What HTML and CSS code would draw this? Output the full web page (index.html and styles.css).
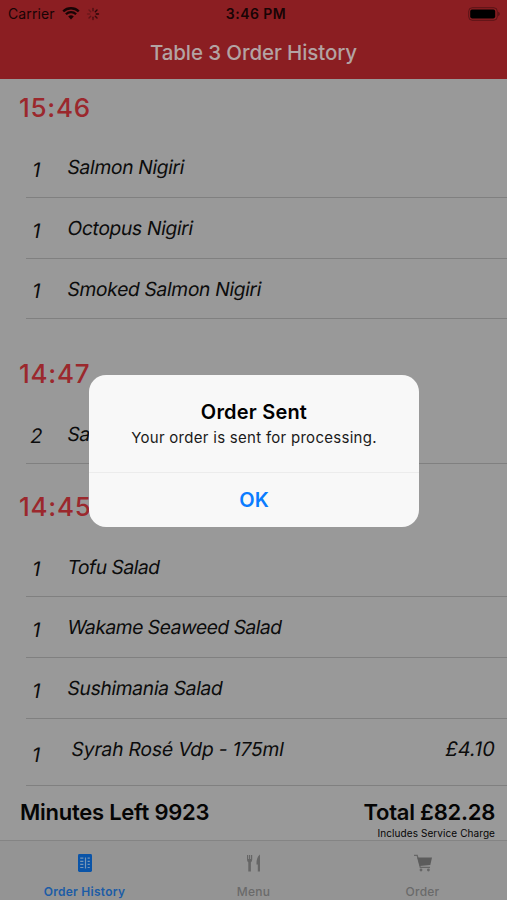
FILE: index.html
```html
<!DOCTYPE html>
<html lang="en">
<head>
<meta charset="utf-8">
<title>Order History</title>
<link rel="stylesheet" href="styles.css">
</head>
<body>
<div class="screen">
  <header class="header">
    <div class="status">
      <div class="status-left">
        <span class="carrier">Carrier</span>
        <svg class="wifi" width="18" height="13" viewBox="0 0 18 13"><path d="M9 12.500 6.200 9.600a4 4 0 0 1 5.600 0z" fill="currentColor"/><path d="M3.900 7.300a7.300 7.300 0 0 1 10.200 0M1.200 4.400a11.200 11.200 0 0 1 15.600 0" fill="none" stroke="currentColor" stroke-width="2.300"/></svg>
        <svg class="spinner" width="14" height="14" viewBox="-7 -7 14 14" stroke="currentColor" stroke-width="1.4" stroke-linecap="round"><path d="M0-3.2V-5.5" opacity=".55"/><path d="M2.3-2.3 4-4" opacity=".85"/><path d="M3.2 0H5.500" opacity=".85"/><path d="M2.300 2.300 4 4" opacity=".7"/><path d="M0 3.200V5.500" opacity=".55"/><path d="M-2.300 2.300-4 4" opacity=".4"/><path d="M-3.200 0H-5.500" opacity=".25"/><path d="M-2.300-2.300-4-4" opacity=".3"/></svg>
      </div>
      <span class="clock">3:46 PM</span>
      <div class="status-right">
        <svg width="32" height="14" viewBox="0 0 32 14"><rect x=".7" y=".7" width="28.6" height="12.6" rx="3.6" fill="none" stroke="currentColor" stroke-width="1" opacity=".35"/><rect x="2.200" y="2.600" width="25" height="8.800" rx="1.800" fill="currentColor"/><path d="M30.200 4.800q1.600 .6 1.600 2.200t-1.600 2.200z" fill="currentColor" opacity=".4"/></svg>
      </div>
    </div>
    <h1 class="title"><span>Table 3 Order History</span></h1>
  </header>

  <main class="history">
    <section class="group">
      <h2 class="time">15:46</h2>
      <div class="row"><span class="qty">1</span><span class="name">Salmon Nigiri</span></div>
      <div class="row"><span class="qty">1</span><span class="name">Octopus Nigiri</span></div>
      <div class="row"><span class="qty">1</span><span class="name">Smoked Salmon Nigiri</span></div>
    </section>
    <section class="group group-middle">
      <h2 class="time">14:47</h2>
      <div class="row"><span class="qty">2</span><span class="name">Sa</span></div>
    </section>
    <section class="group group-last">
      <h2 class="time">14:45</h2>
      <div class="row"><span class="qty">1</span><span class="name salad">Tofu Salad</span></div>
      <div class="row"><span class="qty">1</span><span class="name salad">Wakame Seaweed Salad</span></div>
      <div class="row"><span class="qty">1</span><span class="name">Sushimania Salad</span></div>
      <div class="row row-priced"><span class="qty">1</span><span class="name">Syrah Rosé Vdp - 175ml</span><span class="price">£4.10</span></div>
    </section>
  </main>

  <div class="summary">
    <span class="minutes">Minutes Left 9923</span>
    <div class="total-box">
      <span class="total">Total £82.28</span>
      <span class="service">Includes Service Charge</span>
    </div>
  </div>

  <nav class="tabs">
    <div class="tab active">
      <svg width="20" height="20" viewBox="0 0 20 20"><rect x="3" y="1" width="14" height="18" rx="1.4" fill="#0a54a8"/><path d="M5.200 5.200h3.200M5.200 8.300h3.200M5.200 11.400h3.200M5.200 14.500h3.200M12.600 5.200h2.200M12.600 8.300h2.200M12.600 11.400h2.200M12.600 14.500h2.200M10.500 4.500v11" stroke="#7897b7" stroke-width="1.200"/></svg>
      <span>Order History</span>
    </div>
    <div class="tab">
      <svg width="20" height="20" viewBox="0 0 20 20" fill="#666"><path d="M3 2h1v4h.8V2h1.400v4H7V2h1.200v4.600q0 2-1.300 2.700V18.500H4.300V9.300Q3 8.600 3 6.600zM16 1.500V18.500H13.800V11.500H12.500Q12.300 4 16 1.500z"/></svg>
      <span>Menu</span>
    </div>
    <div class="tab">
      <svg width="20" height="20" viewBox="0 0 20 20"><path d="M1 2.300H4.200L7.300 14.300H17" fill="none" stroke="#666" stroke-width="1.300"/><path d="M4.300 4.500H19L17.300 12 6.800 13z" fill="#5c5c5c"/><circle cx="8" cy="17" r="1.400" fill="#666"/><circle cx="15.400" cy="17" r="1.400" fill="#666"/></svg>
      <span>Order</span>
    </div>
  </nav>

  <div class="alert" role="dialog">
    <div class="alert-body">
      <div class="alert-title">Order Sent</div>
      <div class="alert-text">Your order is sent for processing.</div>
    </div>
    <div class="alert-action">OK</div>
  </div>
</div>
</body>
</html>
```
FILE: styles.css
```css
* { box-sizing: border-box; }
body { margin: 0; }
.screen {
  position: relative;
  width: 507px;
  height: 900px;
  overflow: hidden;
  display: flex;
  flex-direction: column;
  background: #999;
  color: #0c0c0c;
  font-family: Inter, "Liberation Sans", sans-serif;
  white-space: nowrap;
}
.header { height: 79px; background: #8b1e22; flex: none; }
.status {
  display: grid;
  grid-template-columns: 1fr auto 1fr;
  align-items: center;
  height: 27px;
  padding: 0 7px 0 8px;
  color: #180405;
}
.status-left { display: flex; align-items: center; font-size: 14px; letter-spacing: .1px; }
.wifi { margin-left: 7px; }
.spinner { margin-left: 6px; }
.clock { font-size: 14px; font-weight: 600; letter-spacing: .45px; margin-left: 4px; }
.status-right { display: flex; justify-content: flex-end; color: #000; }
.title {
  margin: 0;
  height: 52px;
  line-height: 51px;
  text-align: center;
  font-size: 20.5px;
  font-weight: 550;
  letter-spacing: -.1px;
  color: #b3a3a3;
}
.history { flex: none; height: 706px; }
.time {
  margin: 0;
  height: 58px;
  padding-left: 19px;
  line-height: 58px;
  font-size: 26px;
  font-weight: 550;
  letter-spacing: .75px;
  color: #9b282d;
}
.group-middle { margin-top: 26px; }
.group-last { margin-top: 14px; }
.row {
  display: flex;
  align-items: center;
  height: 60.8px;
  margin-left: 26px;
  border-bottom: 1px solid #808080;
  font-size: 20px;
}
.qty, .name, .price { transform: skewX(-10deg); transform-origin: 0 70%; }
.qty { width: 20px; text-align: center; padding-top: 6px; }
.name { margin-left: 20.5px; padding-top: 1px; font-size: 19.3px; letter-spacing: -.35px; }
.salad { letter-spacing: -.5px; }
.row-priced { height: 67px; padding: 0 13px 6px 0; }
.row-priced .qty { padding-top: 12px; }
.row-priced .name { margin-left: 25px; letter-spacing: -.18px; }
.price { margin-left: auto; }
.summary {
  display: flex;
  justify-content: space-between;
  height: 55px;
  padding: 0 12px 0 20px;
  font-weight: 600;
  font-size: 22px;
  letter-spacing: -.25px;
  line-height: 55px;
  color: #050505;
}
.total-box { display: flex; flex-direction: column; align-items: flex-end; }
.total { height: 42px; }
.service { font-size: 10px; line-height: 12px; font-weight: 400; letter-spacing: .08px; }
.tabs {
  display: grid;
  grid-template-columns: repeat(3, 1fr);
  height: 60px;
  background: #949494;
  border-top: 1px solid #848484;
}
.tab {
  display: flex;
  flex-direction: column;
  align-items: center;
  padding-top: 12px;
  color: #6a6a6a;
  font-size: 12px;
  font-weight: 500;
  letter-spacing: .25px;
}
.tab span { margin-top: 11px; line-height: 16px; }
.active { color: #1c5ca6; font-weight: 600; }
.alert {
  position: absolute;
  left: 89px;
  top: 375px;
  width: 330px;
  height: 152px;
  border-radius: 17px;
  background: #f8f8f8;
  text-align: center;
  color: #000;
}
.alert-body { height: 98px; padding-top: 24px; border-bottom: 1px solid #ececec; }
.alert-title { font-size: 20px; line-height: 26px; font-weight: 600; letter-spacing: .2px; }
.alert-text { font-size: 15px; line-height: 26px; letter-spacing: .28px; color: #1a1a1a; }
.alert-action { font-size: 20px; line-height: 55px; font-weight: 600; color: #0a7cff; }
```
